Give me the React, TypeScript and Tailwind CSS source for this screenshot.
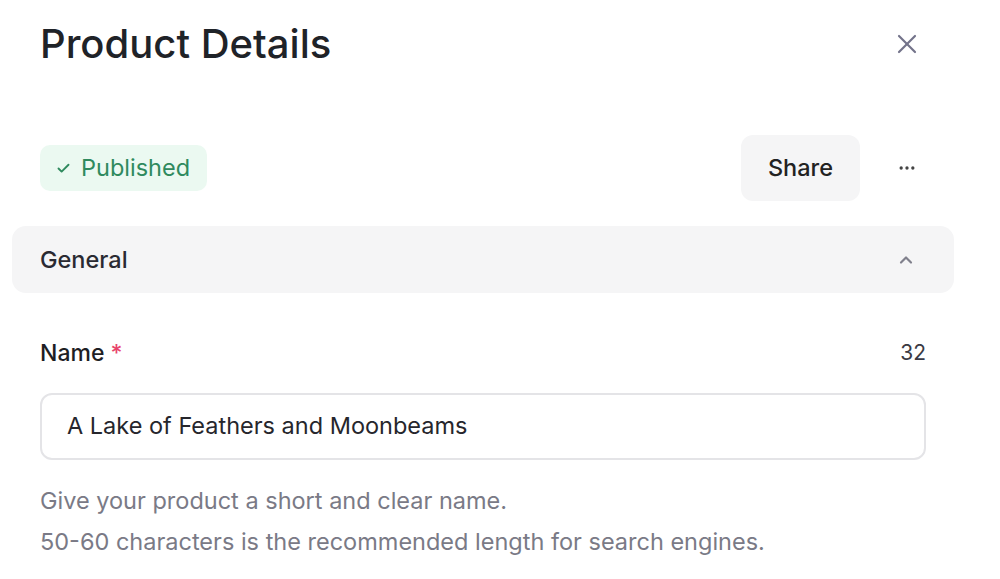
import { Check, ChevronUp, Ellipsis, X } from "lucide-react"

export default function App() {
  return (
    <div className="w-[1000px] h-[579px] overflow-hidden bg-white font-['Inter',sans-serif] text-[#1f2328]">
      <div className="flex items-center justify-between pl-10 pr-[80px] pt-[18px]">
        <h1 className="text-[40px] leading-[52px] font-medium">Product Details</h1>
        <button className="-mr-[3px] text-[#73738a]">
          <X className="h-8 w-8" strokeWidth={1.6} />
        </button>
      </div>

      <div className="mt-[65px] flex items-center justify-between pl-10 pr-[80px]">
        <span className="flex h-[46px] items-center gap-[10px] rounded-[10px] bg-[#ebf9f1] pl-4 pr-[17px] text-[23.5px] text-[#2f8a5e]">
          <Check className="h-[15px] w-[15px]" strokeWidth={3} />
          Published
        </span>
        <div className="flex items-center gap-[37px]">
          <button className="h-[66px] w-[119px] rounded-[12px] bg-[#f5f5f6] text-[23.5px] font-medium text-[#222]">
            Share
          </button>
          <Ellipsis className="mr-[3px] h-5 w-5 text-[#444]" strokeWidth={2} />
        </div>
      </div>

      <div className="mx-3 mt-[25px] flex h-[67px] w-[942px] items-center justify-between rounded-[14px] bg-[#f5f5f6] pl-7 pr-[38px]">
        <span className="text-[23.5px] font-medium text-[#2a2a32]">General</span>
        <ChevronUp className="h-5 w-5 text-[#80808c]" strokeWidth={2.6} />
      </div>

      <div className="pl-10 pr-[74px] pt-[44px]">
        <div className="flex items-center justify-between">
          <label className="text-[23px] font-medium leading-[28px] text-[#1e1e24]">
            Name <span className="text-[#e8436b]">*</span>
          </label>
          <span className="text-[21px] text-[#3a3a44]">32</span>
        </div>
        <div className="mt-[24px] flex h-[67px] items-center rounded-[12px] border-2 border-[#e4e4e7] px-[25px] text-[23.5px] text-[#26262c]">
          A Lake of Feathers and Moonbeams
        </div>
        <div className="mt-[20px] text-[23.5px] leading-[41px] text-[#7a7a86]">
          <p>Give your product a short and clear name.</p>
          <p>50-60 characters is the recommended length for search engines.</p>
        </div>
      </div>
    </div>
  )
}
